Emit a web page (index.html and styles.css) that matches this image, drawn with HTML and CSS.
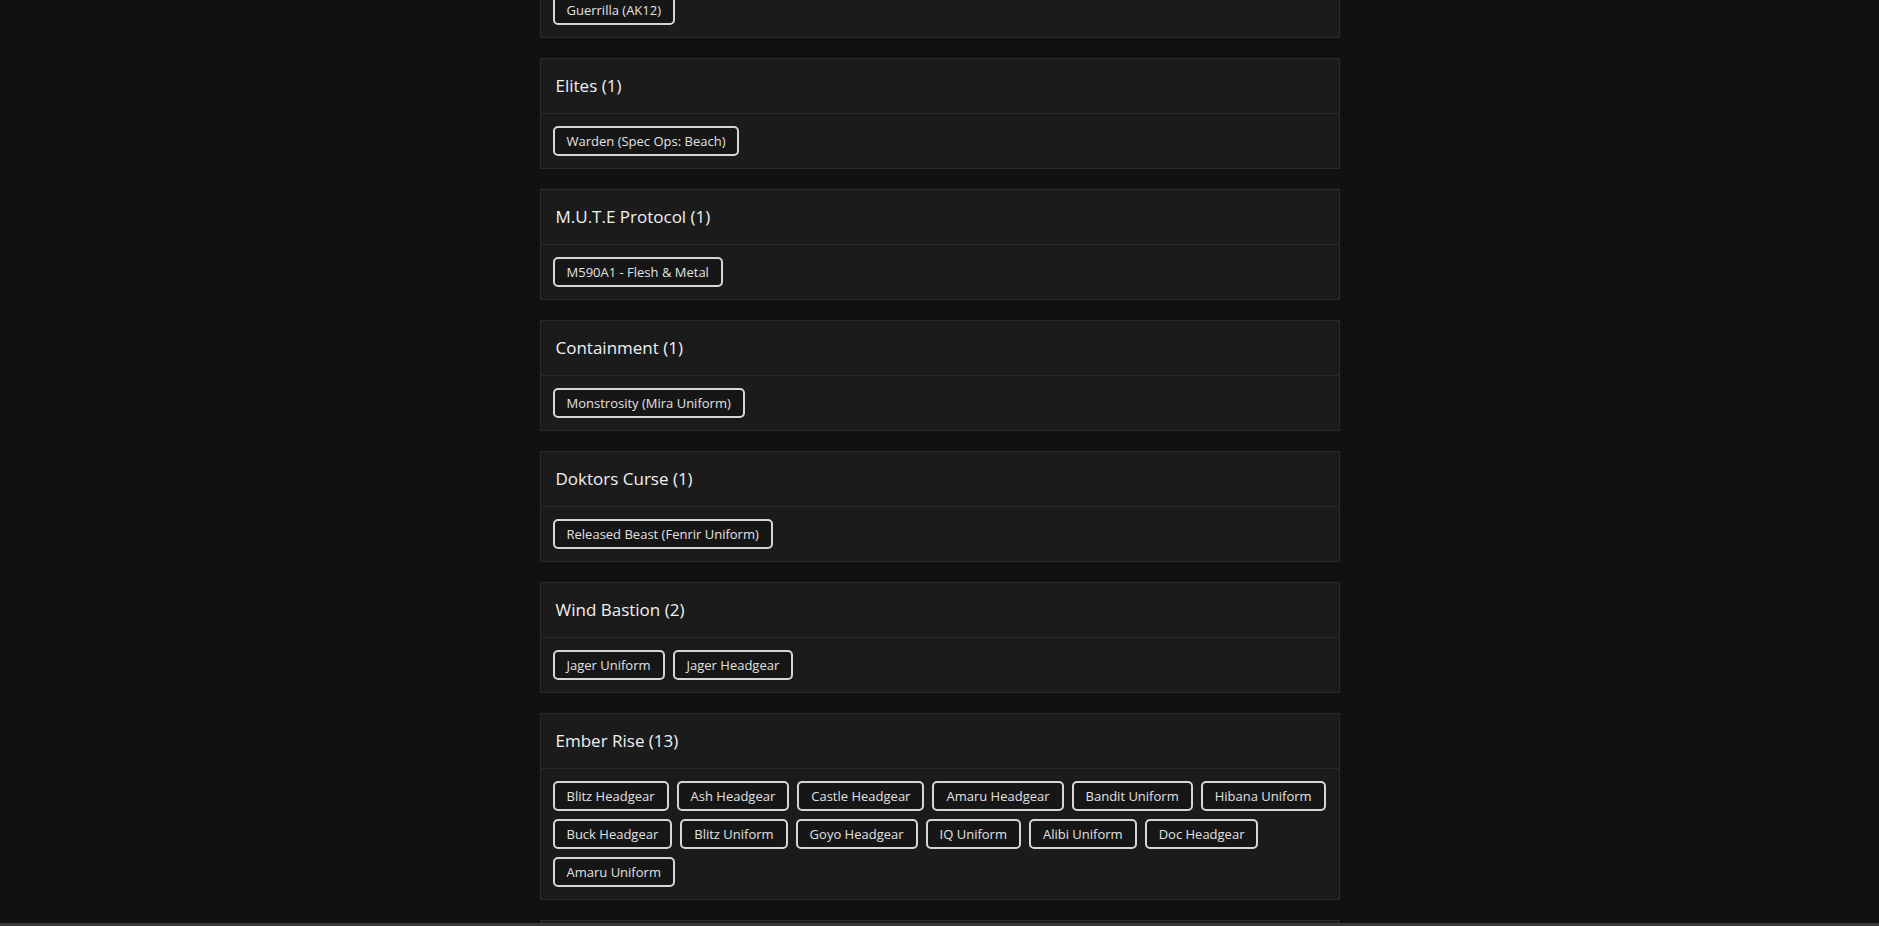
FILE: index.html
```html
<!DOCTYPE html>
<html lang="en">
<head>
    <meta charset="UTF-8">
    <meta name="viewport" content="width=device-width, initial-scale=1.0">
    <title>Skin Collections</title>
    <link rel="stylesheet" href="styles.css">
</head>
<body>
    <div class="page">
        <div class="collections" id="collectionList">
            <!-- Cards will be inserted here -->
        </div>
    </div>
    <div class="bottom-bar"></div>
    <script>
        const collectionList = document.getElementById("collectionList");

        // Events and their unlocked items
        const collections = [
            { name: "Outbreak", items: ["Guerrilla (AK12)"] },
            { name: "Elites", items: ["Warden (Spec Ops: Beach)"] },
            { name: "M.U.T.E Protocol", items: ["M590A1 - Flesh & Metal"] },
            { name: "Containment", items: ["Monstrosity (Mira Uniform)"] },
            { name: "Doktors Curse", items: ["Released Beast (Fenrir Uniform)"] },
            { name: "Wind Bastion", items: ["Jager Uniform", "Jager Headgear"] },
            {
                name: "Ember Rise",
                items: [
                    "Blitz Headgear", "Ash Headgear", "Castle Headgear", "Amaru Headgear",
                    "Bandit Uniform", "Hibana Uniform", "Buck Headgear", "Blitz Uniform",
                    "Goyo Headgear", "IQ Uniform", "Alibi Uniform", "Doc Headgear",
                    "Amaru Uniform"
                ]
            },
            { name: "Shifting Tides", items: ["Kali Headgear"] },
        ];

        function escapeHtml(text) {
            return text.replace(/&/g, "&amp;").replace(/</g, "&lt;");
        }

        // Build one card per collection
        function renderCollections() {
            collectionList.innerHTML = "";
            collections.forEach((entry) => {
                const card = document.createElement("div");
                card.className = "card";
                card.innerHTML = `
                    <div class="card-header">
                        <h2>${escapeHtml(entry.name)} (${entry.items.length})</h2>
                    </div>
                    <div class="card-body">
                        ${entry.items.map((item) => `<span class="tag">${escapeHtml(item)}</span>`).join("")}
                    </div>
                `;
                collectionList.appendChild(card);
            });
        }

        renderCollections();
    </script>
</body>
</html>
```

FILE: styles.css
```css
body {
    font-family: "Open Sans", "DejaVu Sans", sans-serif;
    background-color: #111111;
    color: #e6e6e6;
    margin: 0;
    padding: 0;
}
.page {
    height: 100vh;
    overflow: hidden;
}
/* list is shown scrolled part way down */
.collections {
    max-width: 800px;
    margin: -73px auto 0;
}
.card {
    background: #1b1b1b;
    border: 1px solid #2b2b2b;
    margin-bottom: 20px;
}
.card-header {
    padding: 16px 15px;
    border-bottom: 1px solid #2b2b2b;
}
.card-header h2 {
    margin: 0;
    font-size: 17px;
    line-height: 22px;
    font-weight: 500;
    color: #f0f0f0;
}
.card-body {
    display: flex;
    flex-wrap: wrap;
    gap: 8px 8px;
    padding: 12px;
}
.tag {
    display: inline-block;
    padding: 5px 12px;
    font-size: 13px;
    line-height: 16px;
    color: #e2e2e2;
    background: #161616;
    border: 2px solid #d6d6d6;
    border-radius: 5px;
}
.bottom-bar {
    position: fixed;
    left: 0;
    right: 0;
    bottom: 0;
    height: 3px;
    background: #3a3a3a;
}
```
